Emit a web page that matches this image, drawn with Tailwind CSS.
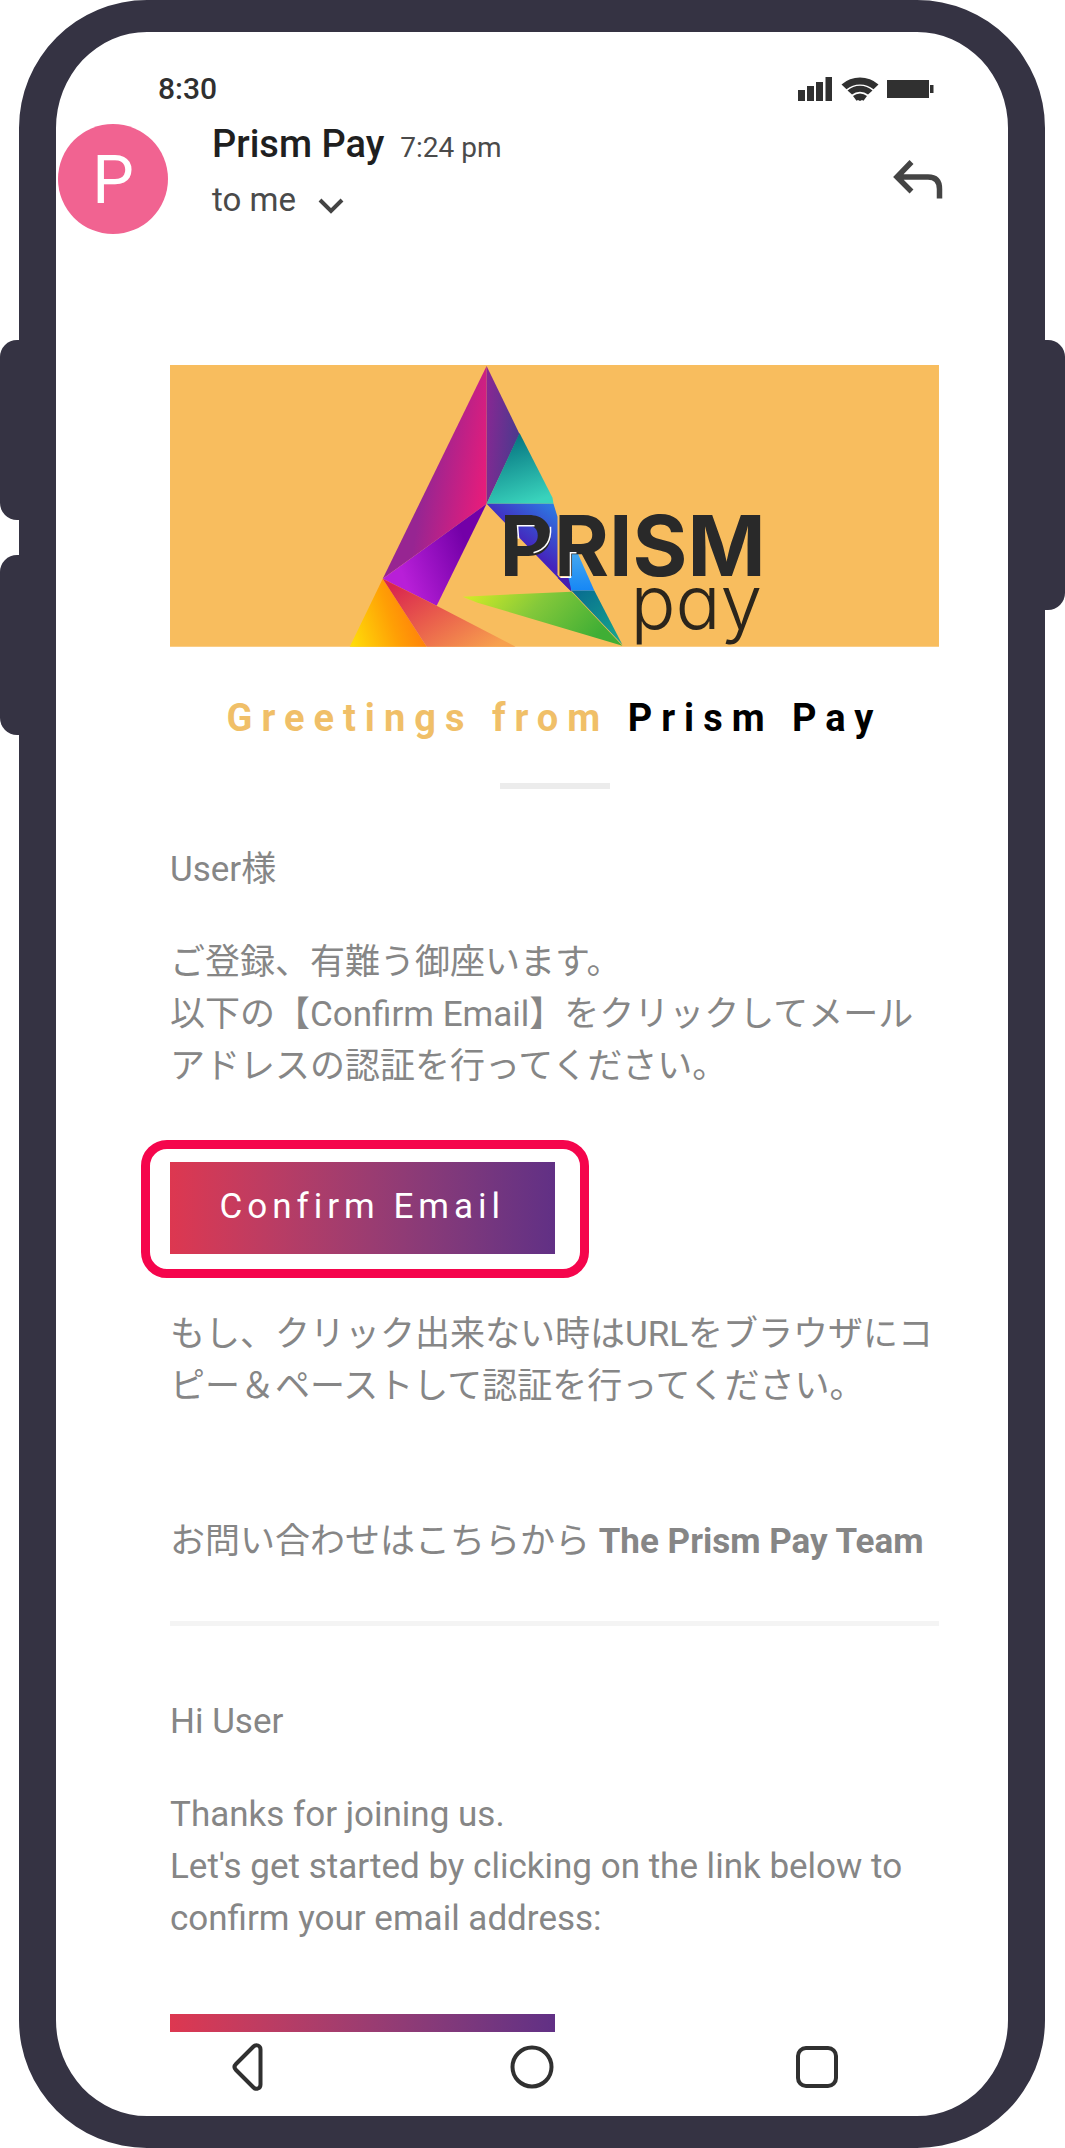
<!DOCTYPE html>
<html lang="ja">
<head>
<meta charset="utf-8">
<meta name="viewport" content="width=device-width, initial-scale=1">
<title>Prism Pay</title>
<script src="https://cdn.jsdelivr.net/npm/@tailwindcss/browser@4"></script>
</head>
<body class="bg-white font-['Roboto','Noto_Sans_CJK_JP',sans-serif]">
<div class="relative min-h-screen flex flex-col pl-[19px] pr-5">
  <!-- side keys -->
  <div class="absolute left-0 top-[340px] w-10 h-[180px] rounded-l-[17px] bg-[#353343]"></div>
  <div class="absolute left-0 top-[555px] w-10 h-[180px] rounded-l-[17px] bg-[#353343]"></div>
  <div class="absolute right-0 top-[340px] w-10 h-[270px] rounded-r-[17px] bg-[#353343]"></div>

  <div class="relative flex-1 flex flex-col bg-white border-x-[37px] border-y-[32px] border-[#353343] rounded-[128px]">
    <header class="flex items-center justify-between pl-[102px] pr-[74px] pt-8 h-[82px] box-border">
      <span class="text-[30px] leading-8 font-medium text-[#303030]">8:30</span>
      <svg class="w-[136px] h-6" viewBox="0 0 136 24" fill="#303030" aria-hidden="true">
        <path d="M0 13h7v11H0zM9 9h7v15H9zM18 5h7v19h-7zM27.500 0h6.500v24h-6.500zM89 3h42v18H89zM132 8h3.500v8h-3.500z"/>
        <path d="M43.500 7.500a28 28 0 0 1 37 0l-5 4.800a21 21 0 0 0-27 0z"/>
        <path d="M49.500 13.500a19 19 0 0 1 25 0l-4.500 4a13 13 0 0 0-16 0z"/>
        <path d="M55 19a11 11 0 0 1 14 0l-3.500 4.700-1.500-.700-2 .9-2-.9-1.500.700z"/>
      </svg>
    </header>

    <section class="flex items-start pl-[2px] pr-[65px] pt-[10px]">
      <div class="size-[110px] rounded-full bg-[#f16391] text-white flex items-center justify-center pt-1 text-[66px] leading-none shrink-0">P</div>
      <div class="pl-11 flex-1">
        <div class="flex items-baseline gap-4 -mt-[2px]">
          <h2 class="text-[38px] leading-[44px] font-medium text-[#1f1f1f]">Prism Pay</h2>
          <time class="text-[28px] text-[#4a4a4a]">7:24 pm</time>
        </div>
        <button class="flex items-center gap-[22px] mt-[9px] text-[33px] leading-[44px] text-[#4a4a4a]">to me
          <svg class="w-[26px] h-4 mt-3" viewBox="0 0 26 16" fill="none" stroke="#444" stroke-width="4" aria-hidden="true"><path d="M2 2l11 11L24 2"/></svg>
        </button>
      </div>
      <button class="mt-9" aria-label="Reply">
        <svg class="w-[50px] h-10" viewBox="0 0 50 40" fill="none" stroke="#444" stroke-width="5.500" aria-hidden="true"><path d="M18.500 2L4 17l14.500 14.500M4 17h31q11.500 0 11.500 12v9.500"/></svg>
      </button>
    </section>

    <main class="pl-[114px] pr-[69px] pt-[131px] text-[35px] leading-[52px] text-[#868686]">
      <svg class="block w-full h-auto" viewBox="0 0 770 282" role="img" aria-label="Prism Pay">
        <defs>
          <linearGradient id="a" x1="0" y1="0.400" x2="1" y2="0.750"><stop offset="0.400" stop-color="#972592"/><stop offset="1" stop-color="#f01b78"/></linearGradient>
          <linearGradient id="b" x1="0" y1="0" x2="1" y2="0.300"><stop offset="0" stop-color="#8c2693"/><stop offset="1" stop-color="#4d398e"/></linearGradient>
          <linearGradient id="c" x1="0.300" y1="0" x2="0.600" y2="1"><stop offset="0.100" stop-color="#087883"/><stop offset="1" stop-color="#39d3bc"/></linearGradient>
          <linearGradient id="d" x1="0.100" y1="0.700" x2="0.900" y2="0.400"><stop offset="0.100" stop-color="#b81fd8"/><stop offset="0.900" stop-color="#7300a8"/></linearGradient>
          <linearGradient id="e" x1="0" y1="1" x2="1" y2="0.700"><stop offset="0" stop-color="#ffe009"/><stop offset="0.600" stop-color="#ff9f05"/><stop offset="1" stop-color="#ff7c0c"/></linearGradient>
          <linearGradient id="f" x1="0" y1="0" x2="1" y2="0.800"><stop offset="0.100" stop-color="#d9264e"/><stop offset="0.500" stop-color="#e95c4c"/><stop offset="1" stop-color="#f7a04e"/></linearGradient>
          <linearGradient id="g" x1="0.300" y1="0.800" x2="0.900" y2="0"><stop offset="0.350" stop-color="#4524bc"/><stop offset="1" stop-color="#2886e8"/></linearGradient>
          <linearGradient id="h" x1="0" y1="0" x2="1" y2="0.300"><stop offset="0" stop-color="#d9ee25"/><stop offset="0.500" stop-color="#83c83a"/><stop offset="1" stop-color="#3fae35"/></linearGradient>
          <linearGradient id="i" x1="0" y1="0" x2="0" y2="1"><stop offset="0" stop-color="#45a8f0"/><stop offset="1" stop-color="#1687f5"/></linearGradient>
          <linearGradient id="j" x1="0" y1="0" x2="0.800" y2="1"><stop offset="0" stop-color="#086a91"/><stop offset="1" stop-color="#15a58c"/></linearGradient>
        </defs>
        <path fill="#f8bd5e" d="M0 0h770v282H0z"/>
        <path fill="url(#a)" d="M317 1v138L213 214z"/>
        <path fill="url(#b)" d="M317 1l33 68-33 70z"/>
        <path fill="url(#c)" d="M350 68l33 65 1 6h-67z"/>
        <path fill="url(#d)" d="M317 139l-50 102-54-27z"/>
        <path fill="url(#e)" d="M213 214l44 68h-77z"/>
        <path fill="url(#f)" d="M213 214l54 27 79 41h-89z"/>
        <path fill="url(#g)" d="M317 139h67l4 13v58l14 17z"/>
        <path fill="#451db0" d="M388 213h13l1 14z"/>
        <path fill="url(#i)" d="M401 188h7l17 38h-23l-3-13z"/>
        <path fill="url(#j)" d="M402 226h23l28 54z"/>
        <path fill="url(#h)" d="M293 232l109-5 51 54-145-43z"/>
        <text x="330" y="211" fill="#292929" font-size="84" class="font-['Inter','Roboto',sans-serif] font-bold">PRISM</text>
        <path fill="none" stroke="#fff" stroke-width="1.500" d="M349 174l-1-13h17M381 162c1 14-5 23-17 26M391 212.500h10V188h6"/>
        <text x="461" y="264" fill="#2b251c" font-size="75" class="font-['Inter','Roboto',sans-serif] font-light [font-feature-settings:'cv11']">pay</text>
      </svg>

      <h1 class="mt-[45px] text-center text-[38px] font-bold tracking-[9px] text-black whitespace-nowrap"><span class="text-[#f0bf68]">Greetings from</span> Prism Pay</h1>
      <hr class="mx-auto mt-[39px] w-[110px] h-[6px] border-0 bg-[#ececec]">

      <p class="mt-[55px]">User様</p>
      <p class="mt-[41px]">ご登録、有難う御座います。<br>以下の【Confirm Email】をクリックしてメールアドレスの認証を行ってください。</p>

      <div class="relative mt-[69px] w-1/2">
        <a href="#confirm" class="flex h-[92px] items-center justify-center bg-linear-to-r from-[#dd3750] to-[#613085] pb-[2px] text-white tracking-[5px]">Confirm Email</a>
        <div class="pointer-events-none absolute -left-[29px] -right-[34px] -top-[22px] -bottom-6 rounded-[26px] border-[9px] border-[#f5054c]"></div>
      </div>

      <p class="mt-[55px]">もし、クリック出来ない時はURLをブラウザにコピー＆ペーストして認証を行ってください。</p>
      <p class="mt-[103px]">お問い合わせはこちらから <strong class="font-bold">The Prism Pay Team</strong></p>
      <hr class="mt-[53px] h-[5px] border-0 bg-[#f4f4f4]">

      <p class="mt-[70px]">Hi User</p>
      <p class="mt-[41px]">Thanks for joining us.<br>Let's get started by clicking on the link below to confirm your email address:</p>
      <!-- second button, cut off by the navigation bar -->
      <div class="mt-[69px] h-[18px] w-1/2 overflow-hidden">
        <a href="#confirm-en" aria-label="Confirm your email address" class="block h-[92px] bg-linear-to-r from-[#dd3750] to-[#613085]"></a>
      </div>
    </main>

    <nav class="mt-auto flex h-[84px] items-start justify-between px-[169px] pt-[11px]" aria-label="System">
      <button aria-label="Back"><svg class="w-11 h-12" viewBox="-7 0 44 48" fill="none" stroke="#303030" stroke-width="4" stroke-linejoin="round" aria-hidden="true"><path d="M21.500 3.500L4 21q-3 3 0 6l17.500 17.500q2 2 4.500 1 2.500-1 2.500-4V6.500q0-3-2.500-4t-4.500 1z"/></svg></button>
      <button aria-label="Home"><svg class="w-11 h-12" viewBox="0 0 44 48" fill="none" stroke="#303030" stroke-width="4" aria-hidden="true"><circle cx="22" cy="24" r="19.500"/></svg></button>
      <button aria-label="Recent apps"><svg class="w-11 h-12" viewBox="0 0 44 48" fill="none" stroke="#303030" stroke-width="4" aria-hidden="true"><rect x="3" y="5" width="38" height="38" rx="8"/></svg></button>
    </nav>
  </div>
</div>
</body>
</html>
